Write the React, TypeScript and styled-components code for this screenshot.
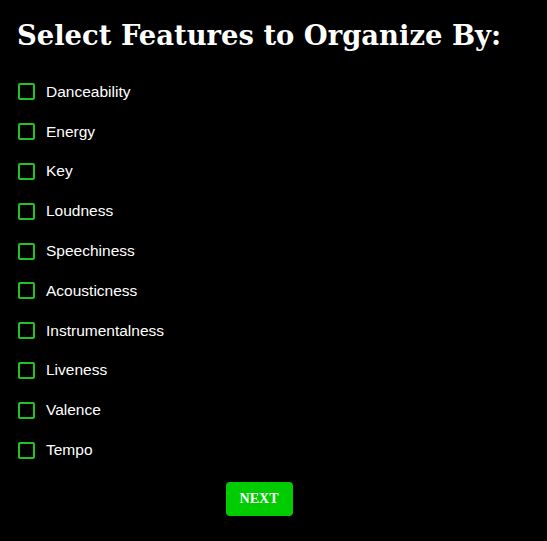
import React, { useState } from 'react';
import styled, { createGlobalStyle } from 'styled-components';

const FEATURES = [
  'Danceability',
  'Energy',
  'Key',
  'Loudness',
  'Speechiness',
  'Acousticness',
  'Instrumentalness',
  'Liveness',
  'Valence',
  'Tempo',
];

const GlobalStyle = createGlobalStyle`
  html, body {
    margin: 0;
    background: #000000;
  }
`;

const App = () => {
  const [selected, setSelected] = useState<string[]>([]);

  function toggle(name: string) {
    setSelected((prev) =>
      prev.includes(name) ? prev.filter((f) => f !== name) : [...prev, name],
    );
  }

  return (
    <Root>
      <GlobalStyle />
      <Panel>
        <Title>Select Features to Organize By:</Title>
        <FeatureList>
          {FEATURES.map((name) => (
            <FeatureRow key={name}>
              <Box
                type="checkbox"
                checked={selected.includes(name)}
                onChange={() => toggle(name)}
              />
              <Label>{name}</Label>
            </FeatureRow>
          ))}
        </FeatureList>
        <ButtonRow>
          <NextButton type="button">NEXT</NextButton>
        </ButtonRow>
      </Panel>
    </Root>
  );
};

const Root = styled.div`
  min-height: 541px;
  padding: 17px;
  box-sizing: border-box;
  background: #000000;
`;

const Panel = styled.div`
  width: fit-content;
`;

const Title = styled.h1`
  margin: 0;
  font-family: 'DejaVu Serif', Georgia, serif;
  font-size: 27.4px;
  line-height: 36px;
  font-weight: 700;
  color: #ffffff;
`;

const FeatureList = styled.div`
  display: flex;
  flex-direction: column;
  margin-top: 19px;
`;

const FeatureRow = styled.label`
  display: flex;
  align-items: center;
  height: 39.8px;
  gap: 11px;
  cursor: pointer;
`;

const Box = styled.input`
  appearance: none;
  margin: 0 0 0 1px;
  width: 17px;
  height: 17px;
  border: 2px solid #1fc41f;
  border-radius: 2px;
  box-sizing: border-box;
  background: transparent;
  cursor: pointer;

  &:checked {
    background: #1fc41f;
  }
`;

const Label = styled.span`
  font-family: 'Liberation Sans', Arial, sans-serif;
  font-size: 15.5px;
  color: #ffffff;
`;

const ButtonRow = styled.div`
  display: flex;
  justify-content: center;
  margin-top: 12px;
`;

const NextButton = styled.button`
  width: 67px;
  height: 34px;
  border: none;
  border-radius: 4px;
  background: #00cc00;
  font-family: Georgia, 'Liberation Serif', serif;
  font-size: 14px;
  font-weight: 700;
  color: #ffffff;
  cursor: pointer;
`;

export default App;
